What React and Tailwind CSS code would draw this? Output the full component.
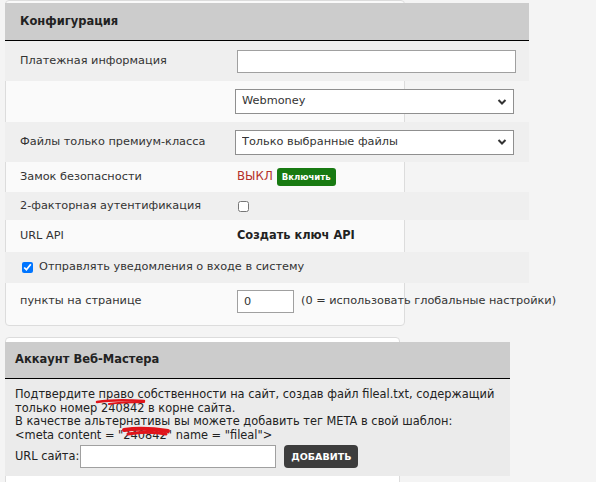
import React from 'react';

const Chevron = () => (
  <svg
    className="pointer-events-none absolute right-[7px] top-1/2 -translate-y-1/2"
    width="10"
    height="7"
    viewBox="0 0 10 7"
    fill="none"
  >
    <path d="M1.5 1.5 L5 5 L8.5 1.5" stroke="#333" strokeWidth="2" />
  </svg>
);

const Select = ({ value }) => (
  <div className="relative ml-[-2px] w-[279px]">
    <select
      defaultValue={value}
      className="h-[25px] w-full appearance-none border border-[#8f8f8f] bg-white pl-[6px] text-[11.3px] text-[#333] outline-none"
    >
      <option>{value}</option>
    </select>
    <Chevron />
  </div>
);

// one line of the settings table
const Row = ({ label, gray, h, children }) => (
  <div className={`flex items-center ${h} ${gray ? 'bg-[#efefef]' : ''}`}>
    <div className="w-[232px] shrink-0 pl-[15px] text-[#333]">{label}</div>
    <div className="flex items-center whitespace-nowrap">{children}</div>
  </div>
);

export default function App() {
  return (
    <div
      className="h-[482px] w-[596px] overflow-hidden bg-[#f4f4f4] text-[11.3px]"
      style={{ fontFamily: '"DejaVu Sans", Verdana, sans-serif' }}
    >
      {/* Конфигурация */}
      <div className="ml-[5px] h-[326px] w-[400px] rounded-[4px] border border-[#dcdcdc] bg-[#fafafa] pt-[2px]">
        <div className="w-[524px] ml-[-1px]">
          <div className="flex h-[38px] items-center border-b border-black bg-[#cccccc] pl-[15px] text-[11.5px] font-bold text-[#222]">
            Конфигурация
          </div>

          <Row label="Платежная информация" gray h="h-[40px]">
            <input className="h-[23px] w-[279px] border border-[#a0a0a0] bg-white outline-none" />
          </Row>

          <Row label="" h="h-[41px]">
            <Select value="Webmoney" />
          </Row>

          <Row label="Файлы только премиум-класса" gray h="h-[40px]">
            <Select value="Только выбранные файлы" />
          </Row>

          <Row label="Замок безопасности" h="h-[30px]">
            <span className="text-[11.8px] text-[#b5302b]">ВЫКЛ</span>
            <button className="ml-[4px] h-[18px] rounded-[3px] bg-[#187a12] px-[5px] text-[8.5px] font-bold text-white">
              Включить
            </button>
          </Row>

          <Row label="2-факторная аутентификация" gray h="h-[28px]">
            <input type="checkbox" className="m-0 ml-[1px] h-[11px] w-[11px]" />
          </Row>

          <Row label="URL API" h="h-[32px]">
            <span className="text-[11.4px] font-bold text-[#222]">Создать ключ API</span>
          </Row>

          <div className="flex h-[31px] items-center gap-[6px] bg-[#efefef] pl-[17px] text-[#333]">
            <input type="checkbox" defaultChecked className="m-0 h-[11px] w-[11px] accent-[#0075ff]" />
            <span>Отправлять уведомления о входе в систему</span>
          </div>

          <Row label="пункты на странице" h="h-[37px]">
            <input
              defaultValue="0"
              className="h-[23px] w-[57px] shrink-0 border border-[#a0a0a0] bg-white pl-[6px] text-[11.3px] text-[#333] outline-none"
            />
            <span className="ml-[7px] text-[#333]">(0 = использовать глобальные настройки)</span>
          </Row>
        </div>
      </div>

      {/* Аккаунт Веб-Мастера */}
      <div className="ml-[5px] mt-[11px] h-[150px] w-[395px] rounded-[4px] border border-[#dcdcdc] bg-white pt-[4px]">
        <div className="w-[505px] ml-[-1px]">
          <div className="flex h-[37px] items-center border-b border-black bg-[#cccccc] pl-[10px] text-[11.5px] font-bold text-[#222]">
            Аккаунт Веб-Мастера
          </div>
          <div className="relative bg-[#ebebeb] px-[10px] pb-[8px] pt-[9px] text-[11.4px] leading-[13.5px] text-[#222]">
            <p>Подтвердите право собственности на сайт, создав файл fileal.txt, содержащий</p>
            <p>только номер 240842 в корне сайта.</p>
            <p>В качестве альтернативы вы можете добавить тег META в свой шаблон:</p>
            <p>&lt;meta content = "240842" name = "fileal"&gt;</p>
            <div className="mt-[3px] flex items-center">
              <span>URL сайта:</span>
              <input className="ml-[1px] h-[23px] w-[196px] border border-[#a0a0a0] bg-white outline-none" />
              <button className="ml-[8px] h-[23px] rounded-[4px] bg-[#3d3d3d] px-[7px] text-[9.5px] font-bold text-white">
                ДОБАВИТЬ
              </button>
            </div>

            {/* red redaction strokes */}
            <svg className="pointer-events-none absolute left-0 top-0" width="200" height="70">
              <path d="M92 23 C104 21 122 21 139 22" stroke="#e0141a" strokeWidth="2.5" fill="none" strokeLinecap="round" />
              <path d="M104 25 C116 23 128 23 139 23" stroke="#e0141a" strokeWidth="2" fill="none" strokeLinecap="round" />
              <path d="M119 51 C132 49 150 50 163 52" stroke="#e0141a" strokeWidth="4" fill="none" strokeLinecap="round" />
              <path d="M123 55 C135 53 150 53 161 55" stroke="#e0141a" strokeWidth="3" fill="none" strokeLinecap="round" />
            </svg>
          </div>
        </div>
      </div>
    </div>
  );
}
